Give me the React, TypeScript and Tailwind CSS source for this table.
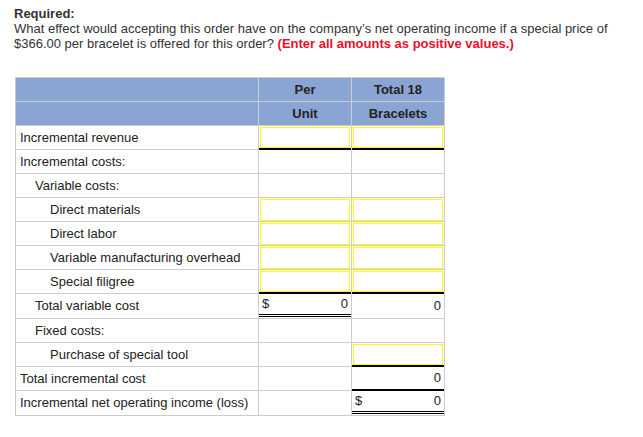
import React from "react";

type Cell = "input" | "blank" | { dollar?: boolean; value: string };

type Row = {
  label: string;
  indent: 0 | 1 | 2;
  c1: Cell;
  c2: Cell;
  line1?: "single" | "double";
  line2?: "single" | "double";
};

const rows: Row[] = [
  { label: "Incremental revenue", indent: 0, c1: "input", c2: "input", line1: "single", line2: "single" },
  { label: "Incremental costs:", indent: 0, c1: "blank", c2: "blank" },
  { label: "Variable costs:", indent: 1, c1: "blank", c2: "blank" },
  { label: "Direct materials", indent: 2, c1: "input", c2: "input" },
  { label: "Direct labor", indent: 2, c1: "input", c2: "input" },
  { label: "Variable manufacturing overhead", indent: 2, c1: "input", c2: "input" },
  { label: "Special filigree", indent: 2, c1: "input", c2: "input", line1: "single", line2: "single" },
  { label: "Total variable cost", indent: 1, c1: { dollar: true, value: "0" }, c2: { value: "0" }, line1: "double" },
  { label: "Fixed costs:", indent: 1, c1: "blank", c2: "blank" },
  { label: "Purchase of special tool", indent: 2, c1: "blank", c2: "input", line2: "single" },
  { label: "Total incremental cost", indent: 0, c1: "blank", c2: { value: "0" }, line2: "single" },
  { label: "Incremental net operating income (loss)", indent: 0, c1: "blank", c2: { dollar: true, value: "0" }, line2: "double" },
];

const indentClass = ["pl-[4px]", "pl-[19px]", "pl-[34px]"];

function ValueCell({ cell, line }: { cell: Cell; line?: "single" | "double" }) {
  return (
    <div className={`border-r border-[#cccccc] flex flex-col h-full ${line ? "" : "border-b"}`}>
      <div className="flex-1 flex flex-col">
        {cell === "input" ? (
          <div className="flex-1 mx-[1px] mt-[1px] border border-[#ffff00] bg-white" />
        ) : cell === "blank" ? null : (
          <div className="flex-1 flex items-center justify-between px-[3px]">
            <span>{cell.dollar ? "$" : ""}</span>
            <span>{cell.value}</span>
          </div>
        )}
      </div>
      {line === "single" && <div className="h-[2px] bg-black" />}
      {line === "double" && (
        <div className="flex flex-col">
          <div className="h-[1px] bg-black" />
          <div className="h-[1px] bg-white" />
          <div className="h-[1px] bg-black" />
          <div className="h-[1px] bg-white" />
          <div className="h-[1px] bg-[#cccccc]" />
        </div>
      )}
    </div>
  );
}

export default function App() {
  return (
    <div className="w-[643px] h-[437px] bg-white text-[#333333] text-[13px] font-['Liberation_Sans',Arial,sans-serif] pt-[6px] pl-[14px]">
      <div className="leading-[15px]">
        <div className="font-bold">Required:</div>
        <div>
          What effect would accepting this order have on the company’s net operating income if a special price of
          <br />
          $366.00 per bracelet is offered for this order?{" "}
          <span className="font-bold text-[#e8112d]">(Enter all amounts as positive values.)</span>
        </div>
      </div>

      <div className="mt-[26px] ml-[1px] w-[429px] grid grid-cols-[243px_93px_93px] border-l border-t border-[#cccccc] text-[#222222]">
        <div className="h-[24px] bg-[#8aa5d3] border-r border-b border-[#cccccc]" />
        <div className="h-[24px] bg-[#8aa5d3] border-r border-b border-[#cccccc] font-bold flex items-center justify-center">Per</div>
        <div className="h-[24px] bg-[#8aa5d3] border-r border-b border-[#cccccc] font-bold flex items-center justify-center">Total 18</div>
        <div className="h-[24px] bg-[#8aa5d3] border-r border-b border-[#cccccc]" />
        <div className="h-[24px] bg-[#8aa5d3] border-r border-b border-[#cccccc] font-bold flex items-center justify-center">Unit</div>
        <div className="h-[24px] bg-[#8aa5d3] border-r border-b border-[#cccccc] font-bold flex items-center justify-center">Bracelets</div>

        {rows.map((r) => (
          <React.Fragment key={r.label}>
            <div
              className={`${indentClass[r.indent]} ${r.line1 === "double" || r.line2 === "double" ? "h-[25px]" : "h-[24px]"} border-r border-b border-[#cccccc] whitespace-nowrap flex items-center`}
            >
              {r.label}
            </div>
            <ValueCell cell={r.c1} line={r.line1} />
            <ValueCell cell={r.c2} line={r.line2} />
          </React.Fragment>
        ))}
      </div>
    </div>
  );
}
